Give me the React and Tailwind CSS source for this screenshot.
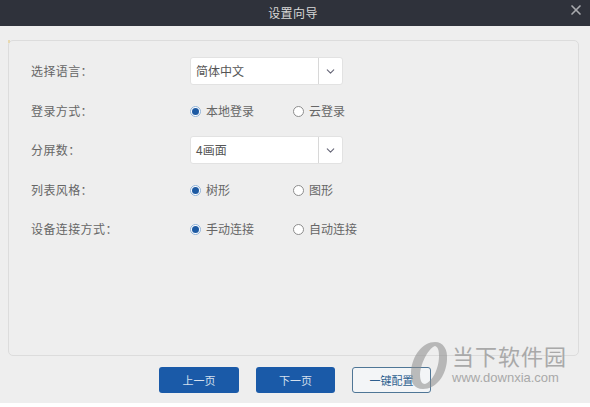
import React from 'react';
import { ChevronDown, X } from 'lucide-react';

const font = { fontFamily: '"Noto Sans CJK SC", "Liberation Sans", sans-serif' };

const Select = ({ value }) => (
  <div className="w-[153px] h-[28px] flex bg-white border border-[#e2e2e2] rounded-[3px] text-[12px] text-[#555]">
    <div className="flex-1 flex items-center pl-[5px]">{value}</div>
    <div className="w-[24px] flex items-center justify-center border-l border-[#d8d8d8]">
      <ChevronDown size={13} strokeWidth={2} className="text-[#667]" />
    </div>
  </div>
);

const Radio = ({ label, checked }) => (
  <div className="w-[103px] flex items-center gap-[5px] text-[12px] text-[#666]">
    {checked ? (
      <span className="w-[11px] h-[11px] rounded-full border border-[#8fb2d8] bg-white flex items-center justify-center">
        <span className="w-[7px] h-[7px] rounded-full bg-[#1d5aa3]" />
      </span>
    ) : (
      <span className="w-[11px] h-[11px] rounded-full border border-[#8d8d8d] bg-white" />
    )}
    <span>{label}</span>
  </div>
);

const Row = ({ label, className, children }) => (
  <div className={`flex items-center ${className}`}>
    <div className="w-[159px] text-[12px] text-[#666] tracking-[0.4px]">{label}</div>
    {children}
  </div>
);

const Watermark = () => (
  <div className="absolute left-[410px] top-[342px] flex items-start gap-[4px] pointer-events-none">
    <svg width="38" height="48" viewBox="0 0 38 48">
      <path
        d="M25 0C33 0 38 7 37 18C36 34 26 47 13 47C4 47 0 40 1 30C2 13 13 0 25 0ZM25 4C19 6 11 20 10 32C10 39 12 42 15 42C22 40 29 27 29 14C29 8 28 5 25 4Z"
        fill="#8a8a8a"
        fillOpacity="0.55"
        fillRule="evenodd"
      />
    </svg>
    <div className="flex flex-col">
      <div className="text-[22px] leading-[26px] tracking-[1px] text-[#a9a9a9] whitespace-nowrap">当下软件园</div>
      <div className="mt-[2px] text-[13px] leading-[16px] text-[#a9a9a9] whitespace-nowrap" style={{ fontFamily: '"Liberation Sans", sans-serif' }}>
        www.downxia.com
      </div>
    </div>
  </div>
);

export default function App() {
  return (
    <div className="relative w-[590px] h-[407px] bg-white overflow-hidden" style={font}>
      <div className="h-[26px] bg-[#2f323b] flex items-center justify-center relative">
        <span className="text-[12px] text-[#d8d8d8] tracking-[0.4px] pr-[4px]">设置向导</span>
        <X size={16} strokeWidth={2.5} className="absolute right-[6px] top-[2px] text-[#a8aaae]" />
      </div>
      <div className="h-[377px] bg-[#eeeeee] pl-[8px] pr-[11px] pt-[14px]">
        <div className="relative h-[316px] border border-[#dcdcdc] rounded-[5px] pl-[22px] pt-[16px]">
          <span className="absolute left-[-1px] top-[-1px] w-[2px] h-[3px] bg-[#e8d9b0]" />
          <Row label="选择语言：">
            <Select value="简体中文" />
          </Row>
          <Row label="登录方式：" className="mt-[17px]">
            <Radio label="本地登录" checked />
            <Radio label="云登录" />
          </Row>
          <Row label="分屏数：" className="mt-[16px]">
            <Select value="4画面" />
          </Row>
          <Row label="列表风格：" className="mt-[17px]">
            <Radio label="树形" checked />
            <Radio label="图形" />
          </Row>
          <Row label="设备连接方式：" className="mt-[21px]">
            <Radio label="手动连接" checked />
            <Radio label="自动连接" />
          </Row>
        </div>
        <div className="flex gap-[17px] mt-[11px] ml-[151px] text-[11px]">
          <button className="w-[80px] h-[26px] bg-[#1a5aa8] rounded-[3px] text-[#d5e0ee]">上一页</button>
          <button className="w-[79px] h-[26px] bg-[#1a5aa8] rounded-[3px] text-[#d5e0ee]">下一页</button>
          <button className="w-[79px] h-[26px] border border-[#4f7696] bg-[#f3f5f7] rounded-[3px] text-[#2d5f8f]">一键配置</button>
        </div>
      </div>
      <Watermark />
    </div>
  );
}
